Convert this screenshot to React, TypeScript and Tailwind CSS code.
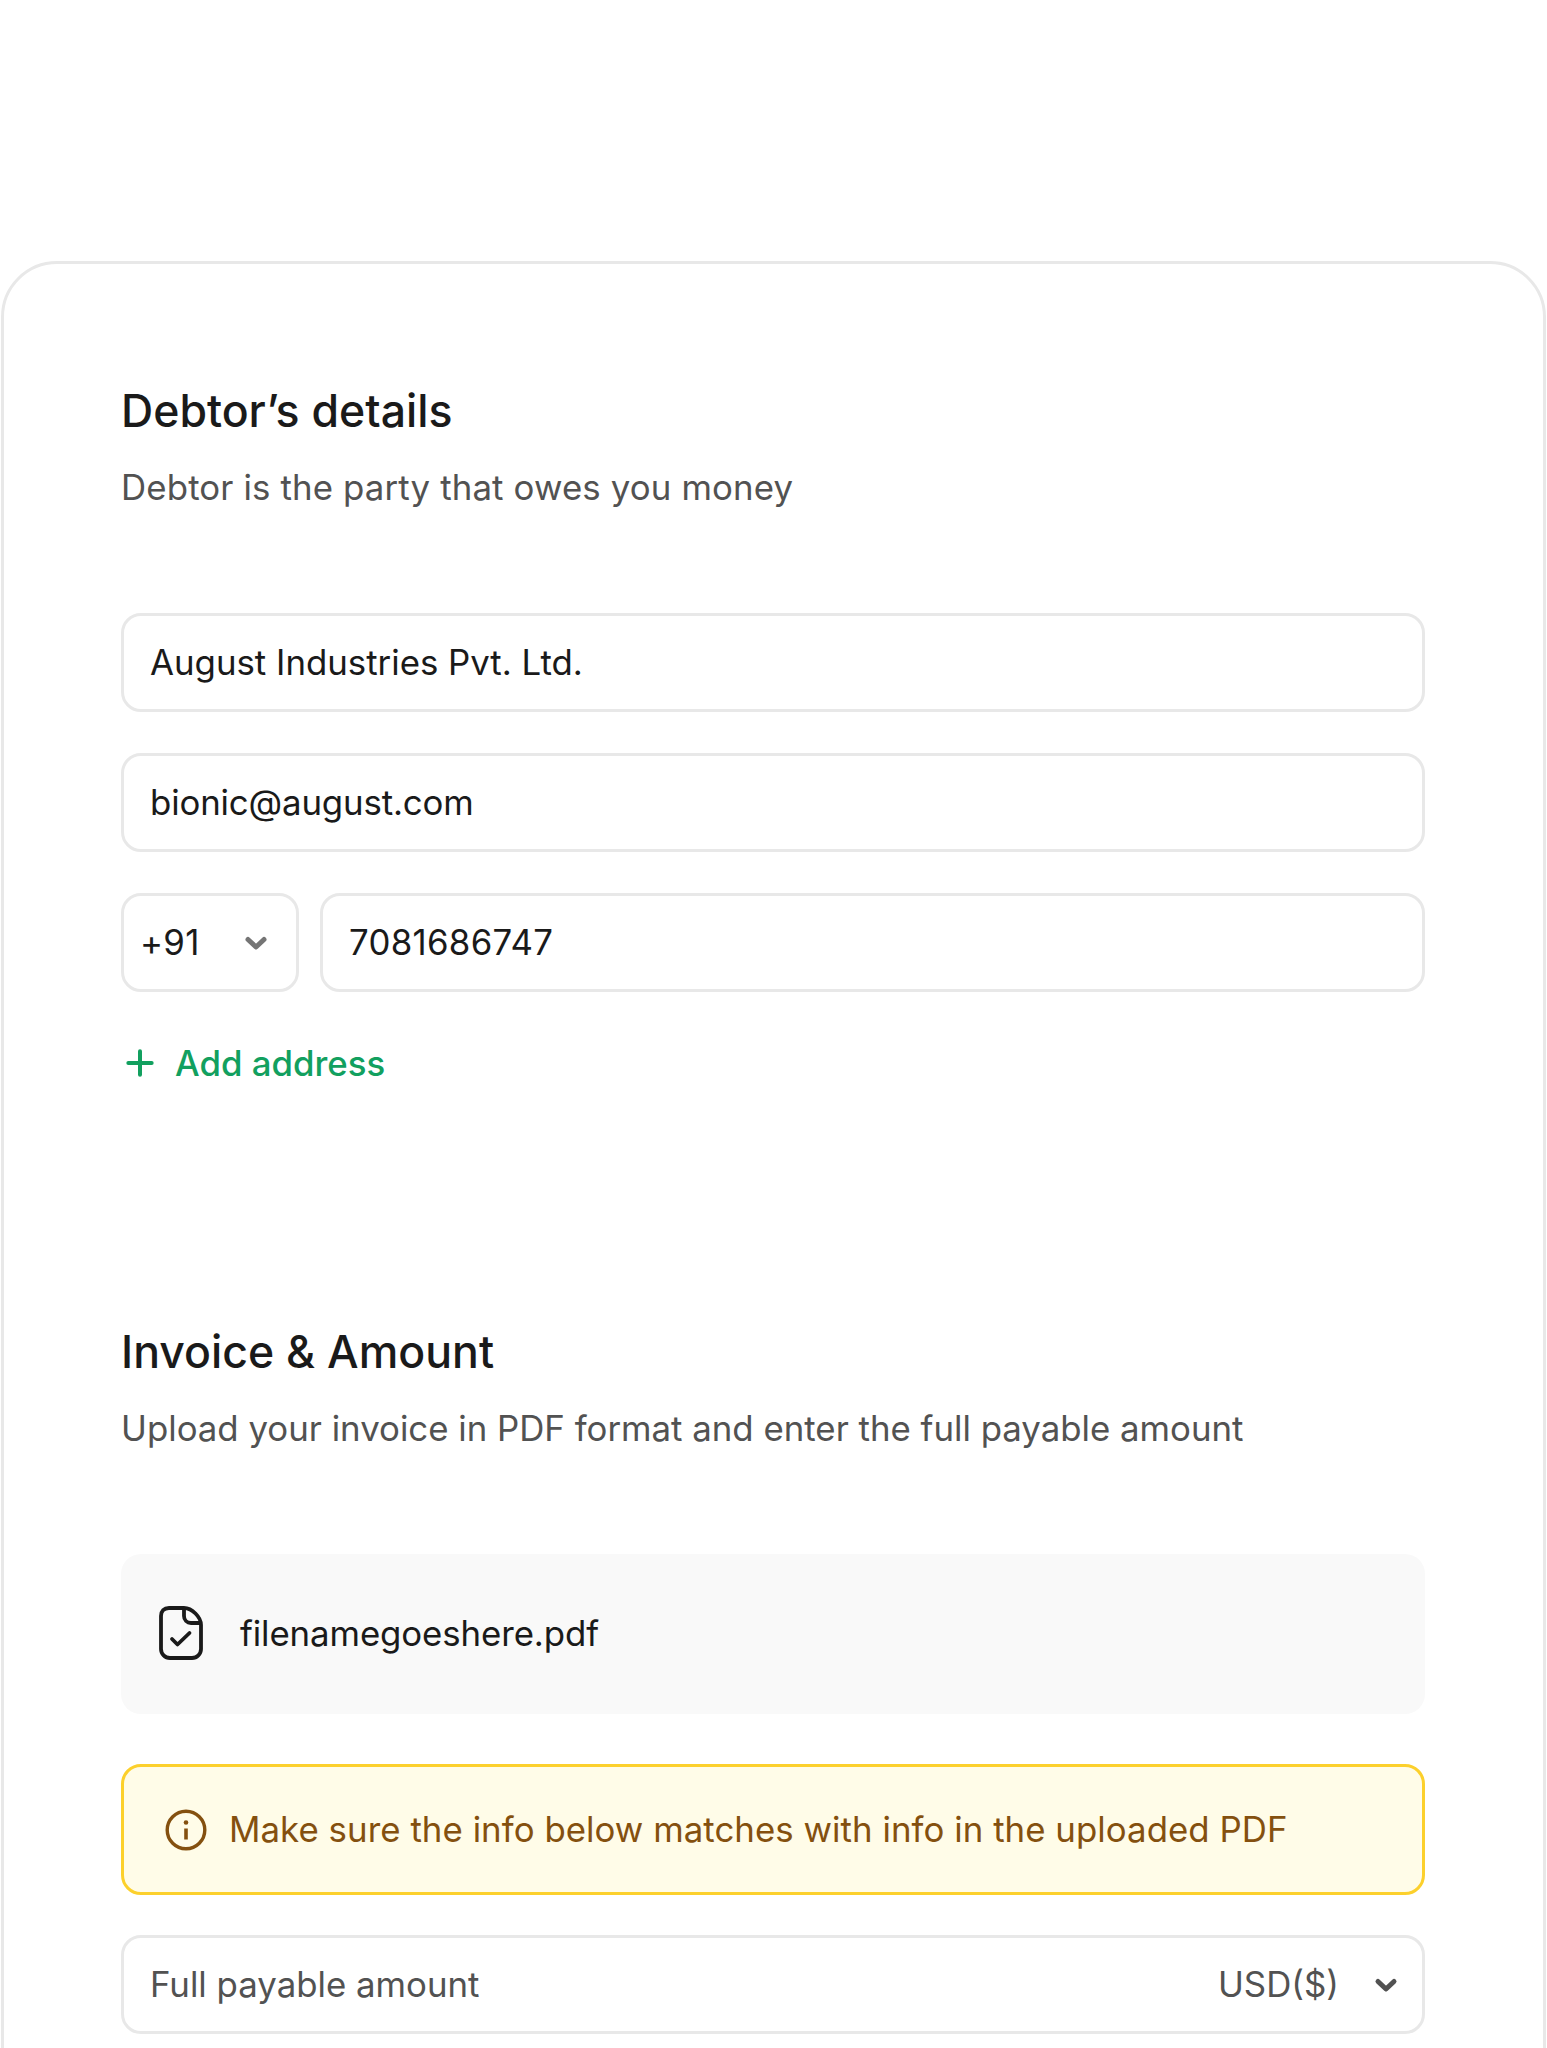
import React from "react";
import { Plus } from "lucide-react";

function Chevron({ className = "" }: { className?: string }) {
  return (
    <svg viewBox="0 0 24 24" fill="none" className={className}>
      <path
        d="M4 8.5L12 16L20 8.5"
        stroke="currentColor"
        strokeWidth="5"
        strokeLinecap="round"
        strokeLinejoin="round"
      />
    </svg>
  );
}

function FileCheck() {
  return (
    <svg viewBox="0 0 44 54" fill="none" className="h-[54px] w-[44px] text-[#1a1a1a]">
      <path
        d="M10 2H25C33 2 42 11 42 19V43C42 48 38 52 33 52H11C6 52 2 48 2 43V10C2 5 5 2 10 2Z"
        stroke="currentColor"
        strokeWidth="3.8"
        strokeLinejoin="round"
      />
      <path
        d="M25 2V10C25 14 28 17 32 17H42"
        stroke="currentColor"
        strokeWidth="3.8"
        strokeLinejoin="round"
      />
      <path
        d="M13 33L18.5 38.5L30.5 27"
        stroke="currentColor"
        strokeWidth="3.8"
        strokeLinecap="round"
        strokeLinejoin="round"
      />
    </svg>
  );
}

function InfoIcon() {
  return (
    <svg viewBox="0 0 42 42" fill="none" className="h-[42px] w-[42px] shrink-0 text-[#84500f]">
      <circle cx="21" cy="21" r="18.8" stroke="currentColor" strokeWidth="3.4" />
      <path d="M21 19.5V30.5" stroke="currentColor" strokeWidth="3.6" />
      <circle cx="21" cy="13.5" r="2.3" fill="currentColor" />
    </svg>
  );
}

function Field({ children, className = "" }: { children: React.ReactNode; className?: string }) {
  return (
    <div
      className={`flex h-[99px] items-center rounded-[20px] border-[3px] border-[#e8e8e8] bg-white text-[34.8px] text-[#1a1a1a] ${className}`}
    >
      {children}
    </div>
  );
}

export default function App() {
  return (
    <div className="h-[2048px] overflow-hidden bg-white px-[1px] pt-[261px] font-['Inter',sans-serif]">
      <div className="h-[1900px] rounded-t-[56px] border-[3px] border-[#e8e8e8] bg-white pt-[122px] pr-[118px] pl-[117px]">
        <h2 className="text-[44.6px] leading-[50px] font-medium text-[#1a1a1a]">Debtor’s details</h2>
        <p className="mt-[26px] text-[34.8px] leading-[50px] tracking-[0.14px] text-[#525252]">
          Debtor is the party that owes you money
        </p>

        <div className="mt-[101px] flex flex-col gap-[41px]">
          <Field className="px-[26px]">August Industries Pvt. Ltd.</Field>
          <Field className="px-[26px] tracking-[-0.15px]">bionic@august.com</Field>
          <div className="flex gap-[21px]">
            <Field className="w-[178px] justify-between pr-[28px] pl-[16px] tracking-[0.3px]">
              <span>+91</span>
              <Chevron className="h-[24px] w-[24px] text-[#757575]" />
            </Field>
            <Field className="flex-1 px-[26px] tracking-[0.3px]">7081686747</Field>
          </div>
        </div>

        <button className="mt-[46px] flex items-center gap-[15px] text-[34.8px] leading-[50px] font-medium text-[#12a05f]">
          <Plus className="-ml-[1px] h-[40px] w-[40px]" strokeWidth={2.4} />
          Add address
        </button>

        <h2 className="mt-[239px] text-[44.6px] leading-[50px] font-medium text-[#1a1a1a]">
          Invoice &amp; Amount
        </h2>
        <p className="mt-[26px] text-[34.8px] leading-[50px] text-[#525252]">
          Upload your invoice in PDF format and enter the full payable amount
        </p>

        <div className="mt-[101px] flex h-[160px] items-center gap-[37px] rounded-[20px] bg-[#f9f9f9] pb-[2px] pl-[38px] text-[34.8px] tracking-[-0.1px] text-[#1a1a1a]">
          <FileCheck />
          filenamegoeshere.pdf
        </div>

        <div className="mt-[50px] flex h-[131px] items-center gap-[22px] rounded-[20px] border-[3px] border-[#fcd02c] bg-[#fffce8] pl-[41px] text-[34.8px] tracking-[0.05px] text-[#84500f]">
          <InfoIcon />
          Make sure the info below matches with info in the uploaded PDF
        </div>

        <Field className="mt-[40px] justify-between pr-[24px] pl-[26px] text-[#525252]">
          <span>Full payable amount</span>
          <span className="flex items-center gap-[35px]">
            USD($)
            <Chevron className="h-[24px] w-[24px] text-[#525252]" />
          </span>
        </Field>
      </div>
    </div>
  );
}
